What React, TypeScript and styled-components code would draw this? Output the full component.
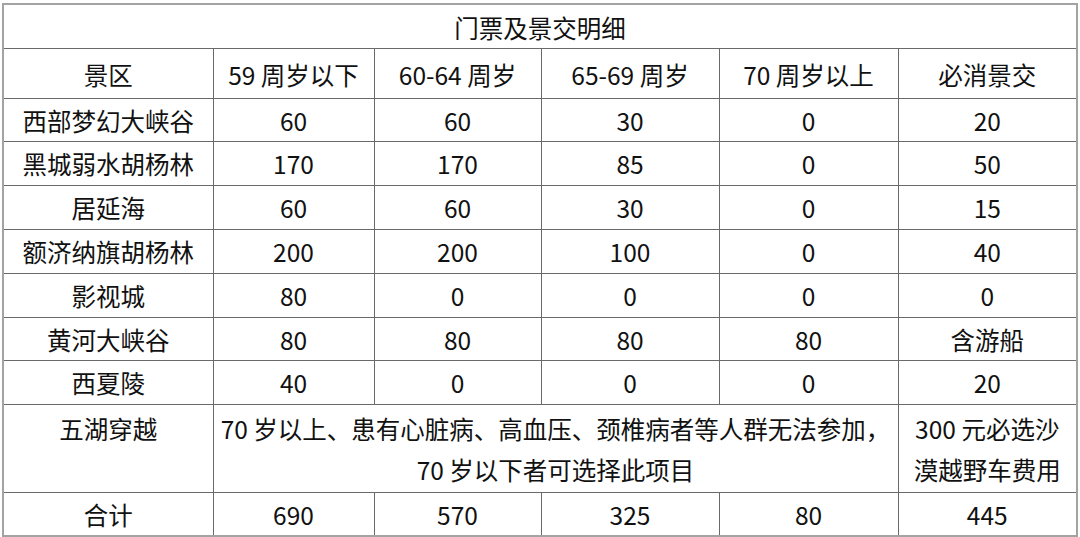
import React from 'react';
import styled, { createGlobalStyle } from 'styled-components';

const GlobalStyle = createGlobalStyle`
  html, body {
    margin: 0;
    padding: 0;
    background: #ffffff;
  }
  body {
    font-family: "Noto Sans CJK SC", "Noto Sans", sans-serif;
    color: #111111;
  }
`

const Page = styled.div`
  width: 1080px;
  height: 537px;
  padding: 3px 0 0 2px;
  box-sizing: border-box;
  background: #ffffff;
`

const Table = styled.table`
  width: 1074px;
  border-collapse: collapse;
  table-layout: fixed;
  border: 2px solid #a3a3a3;
  font-size: 24.5px;
`

const Row = styled.tr<{ h: number }>`
  height: ${p => p.h}px;
`

const Cell = styled.td<{ top?: boolean }>`
  border: 1px solid #6a6a6a;
  text-align: center;
  vertical-align: ${p => (p.top ? 'top' : 'middle')};
  padding: ${p => (p.top ? '3px 4px 0' : '1px 4px 0')};
  line-height: 41px;
  white-space: nowrap;
  overflow: hidden;
`

const TitleCell = styled(Cell)`
  padding-top: 4px;
  line-height: 38px;
`

const HeadCell = styled(Cell)`
  padding-top: 2px;
`

type Spot = {
  name: string
  values: string[]
  h: number
}

const headers = ['景区', '59 周岁以下', '60-64 周岁', '65-69 周岁', '70 周岁以上', '必消景交'];
const widths = [210, 161, 167, 178, 179, 179];

const spots: Spot[] = [
  { name: '西部梦幻大峡谷', values: ['60', '60', '30', '0', '20'], h: 43 },
  { name: '黑城弱水胡杨林', values: ['170', '170', '85', '0', '50'], h: 44 },
  { name: '居延海', values: ['60', '60', '30', '0', '15'], h: 44 },
  { name: '额济纳旗胡杨林', values: ['200', '200', '100', '0', '40'], h: 44 },
  { name: '影视城', values: ['80', '0', '0', '0', '0'], h: 44 },
  { name: '黄河大峡谷', values: ['80', '80', '80', '80', '含游船'], h: 43 },
  { name: '西夏陵', values: ['40', '0', '0', '0', '20'], h: 44 },
];

const totals = ['690', '570', '325', '80', '445'];

const App: React.FC = () => {
  return (
    <Page>
      <GlobalStyle />
      <Table>
        <colgroup>
          {widths.map((w, i) => (
            <col key={i} style={{ width: w }} />
          ))}
        </colgroup>
        <tbody>
          <Row h={44}>
            <TitleCell colSpan={6}>门票及景交明细</TitleCell>
          </Row>
          <Row h={50}>
            {headers.map(h => (
              <HeadCell key={h}>{h}</HeadCell>
            ))}
          </Row>
          {spots.map(s => (
            <Row h={s.h} key={s.name}>
              <Cell>{s.name}</Cell>
              {s.values.map((v, i) => (
                <Cell key={i}>{v}</Cell>
              ))}
            </Row>
          ))}
          <Row h={88}>
            <Cell top>五湖穿越</Cell>
            <Cell top colSpan={4}>
              70 岁以上、患有心脏病、高血压、颈椎病者等人群无法参加，
              <br />
              70 岁以下者可选择此项目
            </Cell>
            <Cell top>
              300 元必选沙
              <br />
              漠越野车费用
            </Cell>
          </Row>
          <Row h={42}>
            <Cell>合计</Cell>
            {totals.map((t, i) => (
              <Cell key={i}>{t}</Cell>
            ))}
          </Row>
        </tbody>
      </Table>
    </Page>
  );
}

export default App;
